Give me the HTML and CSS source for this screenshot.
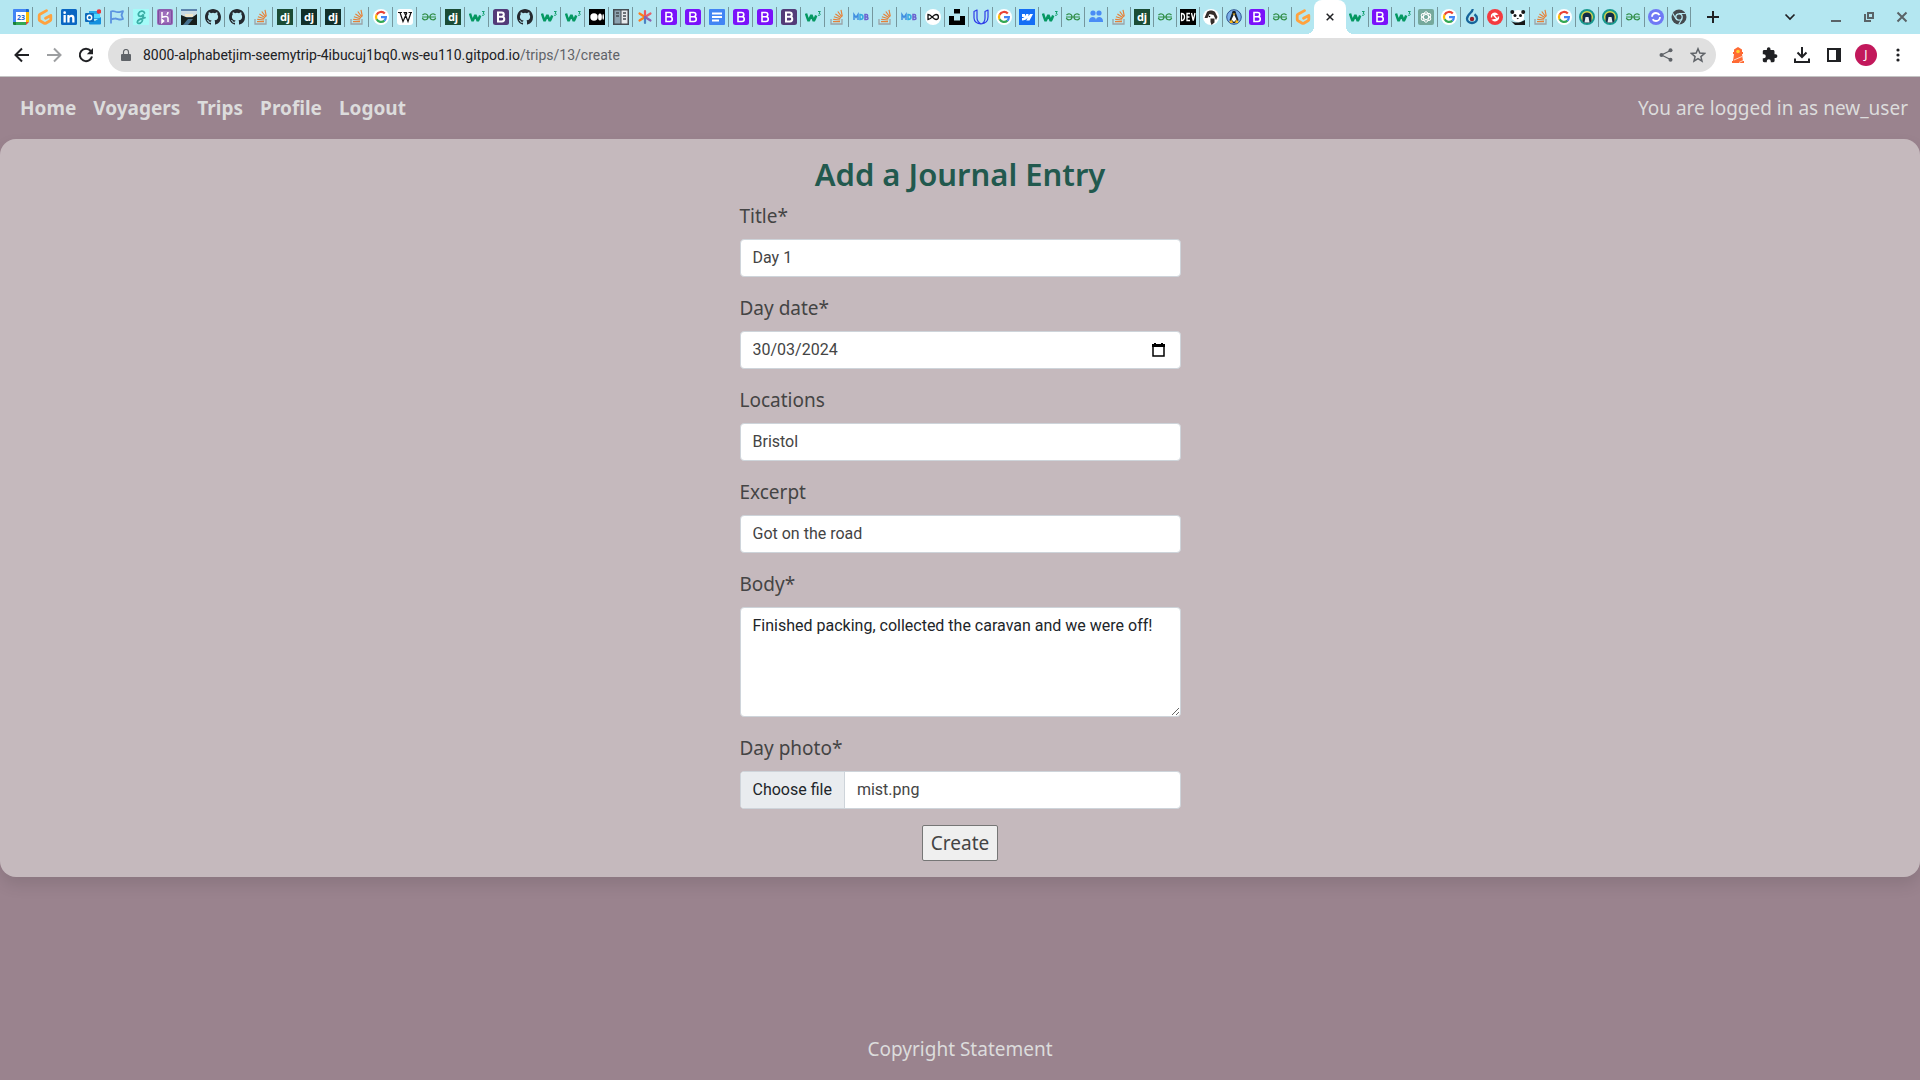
FILE: index.html
```
<!DOCTYPE html>
<html lang="en-GB">
<head>
<meta charset="utf-8">
<meta name="viewport" content="width=device-width, initial-scale=1">
<title>Add a Journal Entry</title>
<link rel="stylesheet" href="styles.css">
</head>
<body>

<svg class="sprite" aria-hidden="true">
  <symbol id="calendar" viewBox="0 0 16 16"><path fill="#4285f4" d="M0 1a1 1 0 0 1 1-1h12v3H3v10H0z"/><path fill="#fff" d="M3 3h10v10H3z"/><path fill="#1967d2" d="M13 0h2a1 1 0 0 1 1 1v2h-3z"/><path fill="#fbbc04" d="M13 3h3v10h-3z"/><path fill="#34a853" d="M3 13h10v3H3z"/><path fill="#188038" d="M0 13h3v3H1a1 1 0 0 1-1-1z"/><path fill="#ea4335" d="M13 13h3l-3 3z"/><text x="8" y="10.500" text-anchor="middle" font-size="7" font-weight="700" fill="#1967d2">23</text></symbol>
  <symbol id="gitpod" viewBox="0 0 16 16"><path d="M9.500 1.600 3 5.300a1.500 1.500 0 0 0-.8 1.300v3.900c0 .6.300 1 .8 1.300l4.200 2.400c.5.300 1.100.3 1.600 0l4.200-2.400c.5-.3.800-.7.800-1.300V6.400L8.600 9.300" fill="none" stroke="#ffa23e" stroke-width="2.800" stroke-linecap="round" stroke-linejoin="round"/></symbol>
  <symbol id="linkedin" viewBox="0 0 16 16"><rect width="16" height="16" rx="1.500" fill="#0a66c2"/><path fill="#fff" d="M2.500 6h2.300v7.500H2.500zM6.300 6h2.200v1c.5-.8 1.300-1.200 2.300-1.200 2 0 2.700 1.300 2.700 3.400v4.300h-2.300V9.600c0-1-.3-1.700-1.200-1.700-1 0-1.400.8-1.400 1.800v3.800H6.300z"/><circle cx="3.650" cy="3.700" r="1.350" fill="#fff"/></symbol>
  <symbol id="outlook" viewBox="0 0 16 16"><path fill="#28a8ea" d="M4 2h10v8H4z"/><path fill="#50d9ff" d="M9 5h6v4H9z"/><path fill="#1490df" d="M4 9l6 3 6-4v6.500a1 1 0 0 1-1 1H5a1 1 0 0 1-1-1z"/><rect y="4" width="9" height="9" rx="1" fill="#0f6cbd"/><circle cx="4.500" cy="8.500" r="2.200" fill="none" stroke="#fff" stroke-width="1.400"/><circle cx="14" cy="2.500" r="2.300" fill="#e8373e"/></symbol>
  <symbol id="flag" viewBox="0 0 16 16"><path d="M2 14.500V2.500c3-1.500 4 .8 7 .6 2 0 3-.6 5-1l-1.500 4L14 10c-4 1.600-5-.6-8-.5-1.600 0-2.500.5-4 1" fill="none" stroke="#5b93e0" stroke-width="1.800" stroke-linejoin="round"/></symbol>
  <symbol id="script-g" viewBox="0 0 16 16"><rect width="16" height="16" fill="#a4fbf8"/><path d="M11.500 4c-.5-2.800-5-2.300-6 .5-.8 3 2.600 4 5 .9L9.500 11c-.3 3-4 4.300-5 2.600-.8-2.300 3-4 7.500-5" fill="none" stroke="#3aaea6" stroke-width="1.800" stroke-linecap="round"/></symbol>
  <symbol id="heroku" viewBox="0 0 16 16"><rect width="16" height="16" rx="2" fill="#9d6dbb"/><rect x="1.500" y="1" width="13" height="14" rx="1" fill="none" stroke="#7c4d9f"/><path d="M5 3v5.300C8 7 11 7 11 9v4M11 3c0 1-.5 2-1.300 2.800M5 10.500 6.600 12 5 13.500z" fill="none" stroke="#fff" stroke-width="1.500"/></symbol>
  <symbol id="photo" viewBox="0 0 16 16"><path fill="#5d84ad" d="M0 0h16v16H0z"/><path fill="#c9dbe2" d="M0 2h16v6H0z"/><path fill="#f0e6c8" d="M4 5h8v3H4z"/><path fill="#17201c" d="M0 6l6 2.500h5L16 5v11H0z"/><path fill="#47728f" d="M7 10h5l-5 6H2z"/></symbol>
  <symbol id="github" viewBox="0 0 16 16"><path fill="#24292f" d="M8 0C3.580 0 0 3.580 0 8c0 3.540 2.290 6.530 5.470 7.590.4.070.55-.17.55-.38 0-.19-.01-.82-.01-1.490-2.010.37-2.530-.49-2.690-.94-.09-.23-.48-.94-.82-1.130-.28-.15-.68-.52-.01-.53.63-.01 1.080.58 1.230.82.72 1.210 1.870.87 2.330.66.07-.52.28-.87.51-1.070-1.780-.2-3.640-.89-3.640-3.950 0-.87.31-1.590.82-2.150-.08-.2-.36-1.020.08-2.120 0 0 .67-.21 2.200.82a7.600 7.600 0 0 1 4 0c1.530-1.040 2.200-.82 2.200-.82.44 1.100.16 1.920.08 2.120.51.56.82 1.270.82 2.150 0 3.070-1.870 3.750-3.650 3.950.29.25.54.73.54 1.480 0 1.070-.01 1.930-.01 2.200 0 .21.15.46.55.38A8 8 0 0 0 16 8c0-4.420-3.580-8-8-8z"/></symbol>
  <symbol id="stack" viewBox="0 0 16 16"><path d="M2 10v5h11v-5" fill="none" stroke="#9ba3a7" stroke-width="1.300"/><path d="M4 12.700h7M4.200 10.300l6.900.7M4.900 7.700l6.500 2M6.400 5l5.700 3.700M8.800 2.500l4 5.500M12 .8l1.300 6.500" stroke="#e58139" stroke-width="1.200" fill="none"/></symbol>
  <symbol id="django" viewBox="0 0 16 16"><rect width="16" height="16" fill="#1b4c35"/><text x="8" y="11.500" text-anchor="middle" font-size="11" font-weight="700" fill="#fff">dj</text></symbol>
  <symbol id="django-dark" viewBox="0 0 16 16"><rect width="16" height="16" fill="#12302a"/><text x="8" y="11.500" text-anchor="middle" font-size="11" font-weight="700" fill="#fff">dj</text></symbol>
  <symbol id="google" viewBox="0 0 16 16"><circle cx="8" cy="8" r="8" fill="#fff"/><g fill="none" stroke-width="2.200"><path stroke="#ea4335" d="M11.800 4.600A5 5 0 0 0 3.600 5.700"/><path stroke="#fbbc05" d="M3.600 5.600a5 5 0 0 0 0 4.800"/><path stroke="#34a853" d="M3.600 10.300a5 5 0 0 0 7.800 1.300"/><path stroke="#4285f4" d="M8 8.200h4.900a5 5 0 0 1-1.600 3.500"/></g></symbol>
  <symbol id="wiki" viewBox="0 0 16 16"><rect width="16" height="16" rx="3" fill="#fff"/><path d="M1 3.500h4M6.500 3.500h3.500M11.500 3.500h3.500M3 3.500l3 9 4-9M7.500 3.500l3.500 9 3-9" fill="none" stroke="#111" stroke-width="1.200"/></symbol>
  <symbol id="geeks" viewBox="0 0 16 16"><path d="M1 8h14M1.500 6.200C3 4 7 4.500 7 8c0 3-4.500 4-5.700 1M14.500 6.200C13 4 9 4.500 9 8c0 3 4.500 4 5.700 1" fill="none" stroke="#2f8d46" stroke-width="1.200"/></symbol>
  <symbol id="w3" viewBox="0 0 16 16"><path d="M1 4.500c.8 3 1.600 5 2.600 7.500L6.400 6l2.400 6c1-2 1.600-3.300 2.400-5.500" fill="none" stroke="#059862" stroke-width="2.500" stroke-linejoin="bevel"/><path d="M13 2.500h2.300L14 4.300c2 0 1.700 2.600-1 1.900" fill="none" stroke="#059862" stroke-width=".9"/></symbol>
  <symbol id="boot" viewBox="0 0 16 16"><rect width="16" height="16" rx="2.500" fill="#7a12fa"/><path d="M5 3.500h3.700c2.800 0 2.800 4.200 0 4.200H5h4c3 0 3 4.800 0 4.800H5z" fill="none" stroke="#fff" stroke-width="1.600"/></symbol>
  <symbol id="boot-old" viewBox="0 0 16 16"><rect width="16" height="16" rx="2.500" fill="#533b78"/><path d="M5 3.500h3.700c2.800 0 2.800 4.200 0 4.200H5h4c3 0 3 4.800 0 4.800H5z" fill="none" stroke="#fff" stroke-width="2"/></symbol>
  <symbol id="medium" viewBox="0 0 16 16"><rect width="16" height="16" fill="#000"/><circle cx="5" cy="8" r="3.700" fill="#fff"/><ellipse cx="11" cy="8" rx="1.900" ry="3.500" fill="#fff"/><ellipse cx="14.200" cy="8" rx=".8" ry="3" fill="#fff"/></symbol>
  <symbol id="book" viewBox="0 0 16 16"><rect width="16" height="16" fill="#454c52"/><path fill="#8da2af" d="M1.500 1.500h6v13h-6z"/><path fill="#e6eaec" d="M8.500 1.500h6v13h-6z"/><path d="M3 4h3M3 7h3M10 4h3M10 7h3M10 10h3" stroke="#454c52" stroke-width="1.300"/></symbol>
  <symbol id="asterisk" viewBox="0 0 16 16"><g stroke-width="2.200" stroke-linecap="round"><path stroke="#f2545b" d="M8 8V2"/><path stroke="#ff7a1a" d="M8 8 2.500 4.500M8 8l-5.500 3.500"/><path stroke="#e5606a" d="M8 8l5.500-3.500"/><path stroke="#4b83c4" d="M8 8v6"/><path stroke="#8e5fb0" d="M8 8l5.500 3.500"/></g></symbol>
  <symbol id="docs" viewBox="0 0 16 16"><rect width="16" height="16" rx="1" fill="#4285f4"/><path d="M3 4.500h10M3 8h10M3 11.500h7" stroke="#fff" stroke-width="1.800"/></symbol>
  <symbol id="mdb" viewBox="0 0 16 16"><g fill="none" stroke-width="1.500"><path stroke="#3f8fe0" d="M1 11V5.500L3 8.500l2-3V11"/><path stroke="#35a9df" d="M7 5.500v5c4 0 4-5 0-5z"/><path stroke="#6b62cf" d="M12 5.500v5h1.500c2 0 2-2.500 0-2.500H12h1.500c1.500 0 1.500-2.500 0-2.500z"/></g></symbol>
  <symbol id="loop" viewBox="0 0 16 16"><circle cx="8" cy="8" r="8" fill="#fff"/><path d="M3 5.500v5c3.500 0 5-5 8-5 3.200 0 3.200 5 0 5-3 0-4.500-5-8-5z" fill="none" stroke="#111" stroke-width="1.300"/></symbol>
  <symbol id="unsplash" viewBox="0 0 16 16"><path d="M5 0h6v4.500H5zM0 7h5v4.500h6V7h5v9H0z"/></symbol>
  <symbol id="udacity" viewBox="0 0 16 16"><path d="M1 2.500 4 1v8c0 3 1.500 4.500 4 6-4 0-7-2.500-7-6zM8 15c4.500-.5 7-3.500 7-7V1l-3 1.500V9c0 3-1 5-4 6z" fill="none" stroke="#2f3ee8" stroke-width="1.200" stroke-linejoin="round"/></symbol>
  <symbol id="webflow" viewBox="0 0 16 16"><rect width="16" height="16" fill="#146ef5"/><path fill="#fff" d="M14 5l-3.500 6.500H7.300L8.700 8.700C7.500 10.300 5.800 11.500 3 11.500V9s1.500-.1 2.500-1.100H3V5h3v2.200L7.300 5h2.200v2.200L11 5z"/></symbol>
  <symbol id="people" viewBox="0 0 16 16"><g fill="#4a8cf5"><circle cx="5" cy="4" r="2.600"/><circle cx="11" cy="4" r="2.600"/><path d="M1 12c0-5 7-5 7-1 0-4 7-4 7 1v1H1z"/></g></symbol>
  <symbol id="dev" viewBox="0 0 16 16"><rect width="16" height="16" fill="#000"/><path d="M1.500 4.500v7c4 0 4-7 0-7zM10 4.500H7v7h3M7 8h2.500M11.500 4l1.700 7.500L15 4" fill="none" stroke="#fff" stroke-width="1.300"/></symbol>
  <symbol id="dog" viewBox="0 0 16 16"><circle cx="8" cy="8" r="8" fill="#fff"/><path fill="#352d2a" d="M4 3c2-2 6-2 8 0l2.500 5-1.500 3-2.500-5-4-1-2 4H1.500zM7.500 9.500h4v4l-3 2.500-1-3z"/><circle cx="6.500" cy="7.500" r=".8"/></symbol>
  <symbol id="tux" viewBox="0 0 16 16"><circle cx="8" cy="8" r="7.300" fill="#7baeea" stroke="#30538f"/><path fill="#16202c" d="M6 4c0-3 4-3 4 0l2.500 7-2 3h-5l-2-3z"/><path fill="#fff" d="M8 5.500l2.500 5L8 13l-2.500-2.500z"/><path fill="#f6b925" d="M6.500 4.500h3L8 6.500zM3.500 12l2.500-1 1 3H4zM12.500 12l-2.500-1-1 3h3z"/></symbol>
  <symbol id="gpt" viewBox="0 0 16 16"><rect width="16" height="16" rx="2" fill="#75a99c"/><g fill="none" stroke="#fff"><ellipse cx="8" cy="8" rx="2.500" ry="5.200"/><ellipse cx="8" cy="8" rx="2.500" ry="5.200" transform="rotate(60 8 8)"/><ellipse cx="8" cy="8" rx="2.500" ry="5.200" transform="rotate(120 8 8)"/></g></symbol>
  <symbol id="drop" viewBox="0 0 16 16"><path d="M8.500 0c1 3-5.500 5-5.500 9.800 0 5.600 10 5.600 10 0 0-2-1-3.400-2.500-4.500" fill="none" stroke="#16659b" stroke-width="2.300"/><circle cx="8" cy="10" r="2.200" fill="#961e2b"/></symbol>
  <symbol id="red" viewBox="0 0 16 16"><circle cx="8" cy="8" r="8" fill="#f43b40"/><path d="M4.500 8.500C4 5 7.500 3 10 5.200L6.500 6l3.500 4-4 1c2.500 2 6-.5 5.500-3.500" fill="none" stroke="#fff" stroke-width="1.500"/></symbol>
  <symbol id="panda" viewBox="0 0 16 16"><path fill="#fff" d="M2 4c2-4 10-4 12 0v6c-3 4-8 4-12 0z"/><g fill="#161616"><circle cx="2.300" cy="3" r="2"/><circle cx="13.200" cy="3" r="2"/><circle cx="5" cy="6.500" r="1.500"/><circle cx="10.500" cy="6.500" r="1.500"/><path d="M6.500 9h2.500l-1.200 1.200zM1 12c4 2.500 9 2 14-1v5H5z"/></g></symbol>
  <symbol id="penguin" viewBox="0 0 16 16"><circle cx="8" cy="8" r="7" fill="#d7d94b" stroke="#19998f" stroke-width="2"/><path fill="#122c46" d="M3.500 7.500c0-5.500 9-5.500 9 0V12c-2 3-7 3-9 0z"/><path fill="#e8edf0" d="M6.500 8h3l1 5.500h-5z"/></symbol>
  <symbol id="orbit" viewBox="0 0 16 16"><circle cx="8" cy="8" r="8" fill="#6f79f5"/><circle cx="8" cy="8" r="4" fill="none" stroke="#fff" stroke-width="1.800" stroke-dasharray="10 2.560"/></symbol>
  <symbol id="chrome" viewBox="0 0 16 16"><circle cx="8" cy="8" r="7.500" fill="#454a4f"/><circle cx="8" cy="8" r="3.200" fill="none" stroke="#b6e8f2" stroke-width="1.300"/><path d="M8 4.500h6.800M5 9.800 1.600 4.200M11 9.800l-3.300 5.700" stroke="#b6e8f2" stroke-width="1.200"/></symbol>
</svg>

<header class="browser">
  <nav class="tabs" aria-label="Open tabs">
    <a class="tab" href="#"><svg><use href="#calendar"/></svg></a>
    <a class="tab" href="#"><svg><use href="#gitpod"/></svg></a>
    <a class="tab" href="#"><svg><use href="#linkedin"/></svg></a>
    <a class="tab" href="#"><svg><use href="#outlook"/></svg></a>
    <a class="tab" href="#"><svg><use href="#flag"/></svg></a>
    <a class="tab" href="#"><svg><use href="#script-g"/></svg></a>
    <a class="tab" href="#"><svg><use href="#heroku"/></svg></a>
    <a class="tab" href="#"><svg><use href="#photo"/></svg></a>
    <a class="tab" href="#"><svg><use href="#github"/></svg></a>
    <a class="tab" href="#"><svg><use href="#github"/></svg></a>
    <a class="tab" href="#"><svg><use href="#stack"/></svg></a>
    <a class="tab" href="#"><svg><use href="#django"/></svg></a>
    <a class="tab" href="#"><svg><use href="#django-dark"/></svg></a>
    <a class="tab" href="#"><svg><use href="#django-dark"/></svg></a>
    <a class="tab" href="#"><svg><use href="#stack"/></svg></a>
    <a class="tab" href="#"><svg><use href="#google"/></svg></a>
    <a class="tab" href="#"><svg><use href="#wiki"/></svg></a>
    <a class="tab" href="#"><svg><use href="#geeks"/></svg></a>
    <a class="tab" href="#"><svg><use href="#django"/></svg></a>
    <a class="tab" href="#"><svg><use href="#w3"/></svg></a>
    <a class="tab" href="#"><svg><use href="#boot-old"/></svg></a>
    <a class="tab" href="#"><svg><use href="#github"/></svg></a>
    <a class="tab" href="#"><svg><use href="#w3"/></svg></a>
    <a class="tab" href="#"><svg><use href="#w3"/></svg></a>
    <a class="tab" href="#"><svg><use href="#medium"/></svg></a>
    <a class="tab" href="#"><svg><use href="#book"/></svg></a>
    <a class="tab" href="#"><svg><use href="#asterisk"/></svg></a>
    <a class="tab" href="#"><svg><use href="#boot"/></svg></a>
    <a class="tab" href="#"><svg><use href="#boot"/></svg></a>
    <a class="tab" href="#"><svg><use href="#docs"/></svg></a>
    <a class="tab" href="#"><svg><use href="#boot"/></svg></a>
    <a class="tab" href="#"><svg><use href="#boot"/></svg></a>
    <a class="tab" href="#"><svg><use href="#boot-old"/></svg></a>
    <a class="tab" href="#"><svg><use href="#w3"/></svg></a>
    <a class="tab" href="#"><svg><use href="#stack"/></svg></a>
    <a class="tab" href="#"><svg><use href="#mdb"/></svg></a>
    <a class="tab" href="#"><svg><use href="#stack"/></svg></a>
    <a class="tab" href="#"><svg><use href="#mdb"/></svg></a>
    <a class="tab" href="#"><svg><use href="#loop"/></svg></a>
    <a class="tab" href="#"><svg><use href="#unsplash"/></svg></a>
    <a class="tab" href="#"><svg><use href="#udacity"/></svg></a>
    <a class="tab tab-narrow" href="#"><svg><use href="#google"/></svg></a>
    <a class="tab tab-narrow" href="#"><svg><use href="#webflow"/></svg></a>
    <a class="tab tab-narrow" href="#"><svg><use href="#w3"/></svg></a>
    <a class="tab tab-narrow" href="#"><svg><use href="#geeks"/></svg></a>
    <a class="tab tab-narrow" href="#"><svg><use href="#people"/></svg></a>
    <a class="tab tab-narrow" href="#"><svg><use href="#stack"/></svg></a>
    <a class="tab tab-narrow" href="#"><svg><use href="#django"/></svg></a>
    <a class="tab tab-narrow" href="#"><svg><use href="#geeks"/></svg></a>
    <a class="tab tab-narrow" href="#"><svg><use href="#dev"/></svg></a>
    <a class="tab tab-narrow" href="#"><svg><use href="#dog"/></svg></a>
    <a class="tab tab-narrow" href="#"><svg><use href="#tux"/></svg></a>
    <a class="tab tab-narrow" href="#"><svg><use href="#boot"/></svg></a>
    <a class="tab tab-narrow" href="#"><svg><use href="#geeks"/></svg></a>
    <a class="tab tab-narrow tab-last" href="#"><svg><use href="#gitpod"/></svg></a>
    <div class="tab-active"><button class="icon-button" type="button" aria-label="Close tab"><svg width="8" height="8" viewBox="0 0 8 8"><path d="M.7.7l6.600 6.600M7.300.7.700 7.300" stroke="#202124" stroke-width="1.500"/></svg></button></div>
    <a class="tab tab-narrow" href="#"><svg><use href="#w3"/></svg></a>
    <a class="tab tab-narrow" href="#"><svg><use href="#boot"/></svg></a>
    <a class="tab tab-narrow" href="#"><svg><use href="#w3"/></svg></a>
    <a class="tab tab-narrow" href="#"><svg><use href="#gpt"/></svg></a>
    <a class="tab tab-narrow" href="#"><svg><use href="#google"/></svg></a>
    <a class="tab tab-narrow" href="#"><svg><use href="#drop"/></svg></a>
    <a class="tab tab-narrow" href="#"><svg><use href="#red"/></svg></a>
    <a class="tab tab-narrow" href="#"><svg><use href="#panda"/></svg></a>
    <a class="tab tab-narrow" href="#"><svg><use href="#stack"/></svg></a>
    <a class="tab tab-narrow" href="#"><svg><use href="#google"/></svg></a>
    <a class="tab tab-narrow" href="#"><svg><use href="#penguin"/></svg></a>
    <a class="tab tab-narrow" href="#"><svg><use href="#penguin"/></svg></a>
    <a class="tab tab-narrow" href="#"><svg><use href="#geeks"/></svg></a>
    <a class="tab tab-narrow" href="#"><svg><use href="#orbit"/></svg></a>
    <a class="tab tab-narrow" href="#"><svg><use href="#chrome"/></svg></a>
    <button class="icon-button new-tab" type="button" aria-label="New tab"><svg width="12" height="12" viewBox="0 0 12 12"><path d="M6 0v12M0 6h12" stroke="#202124" stroke-width="2"/></svg></button>
    <div class="window-controls">
      <button class="icon-button" type="button" aria-label="Search tabs"><svg width="12" height="12" viewBox="0 0 12 12"><path d="M1.500 3.500 6 8l4.500-4.500" fill="none" stroke="#202124" stroke-width="1.700"/></svg></button>
      <button class="icon-button" type="button" aria-label="Minimise"><svg width="12" height="12" viewBox="0 0 12 12"><path d="M1 10h10" stroke="#5a6367" stroke-width="2"/></svg></button>
      <button class="icon-button" type="button" aria-label="Restore"><svg width="12" height="12" viewBox="0 0 12 12"><path d="M5 2h5v5H5zM2 3v7h6" fill="none" stroke="#5a6367" stroke-width="2"/></svg></button>
      <button class="icon-button" type="button" aria-label="Close window"><svg width="12" height="12" viewBox="0 0 12 12"><path d="M1.500 1.500l9 9M10.500 1.500l-9 9" stroke="#5a6367" stroke-width="2"/></svg></button>
    </div>
  </nav>

  <div class="toolbar">
    <div class="history">
      <button class="icon-button" type="button" aria-label="Back"><svg width="16" height="16" viewBox="0 0 16 16"><path d="M15 8H2.500M8 1.500 1.500 8 8 14.500" fill="none" stroke="#202124" stroke-width="2"/></svg></button>
      <button class="icon-button" type="button" aria-label="Forward"><svg width="16" height="16" viewBox="0 0 16 16"><path d="M1 8h12.500M8 1.500 14.500 8 8 14.500" fill="none" stroke="#9d9fa1" stroke-width="2"/></svg></button>
      <button class="icon-button" type="button" aria-label="Reload"><svg width="16" height="16" viewBox="0 0 16 16"><path d="M12.800 4A6.200 6.200 0 1 0 14 9.500" fill="none" stroke="#202124" stroke-width="2"/><path fill="#202124" d="M15 1v6.200H8.800z"/></svg></button>
    </div>
    <div class="address">
      <svg width="10" height="12" viewBox="0 0 10 12" aria-hidden="true"><path fill="#5f6368" d="M1 5h8a1 1 0 0 1 1 1v5a1 1 0 0 1-1 1H1a1 1 0 0 1-1-1V6a1 1 0 0 1 1-1z"/><path d="M2.500 5V3a2.500 2.500 0 0 1 5 0v2" fill="none" stroke="#5f6368" stroke-width="1.200"/></svg>
      <span class="url">8000-alphabetjim-seemytrip-4ibucuj1bq0.ws-eu110.gitpod.io<span class="url-path">/trips/13/create</span></span>
      <div class="address-actions">
        <button class="icon-button" type="button" aria-label="Share"><svg width="14" height="14" viewBox="0 0 14 14"><path d="M11.500 2.500 2.500 7l9 4.500" fill="none" stroke="#5f6368" stroke-width="1.300"/><g fill="#5f6368"><circle cx="11.500" cy="2.300" r="2"/><circle cx="2.500" cy="7" r="2"/><circle cx="11.500" cy="11.700" r="2"/></g></svg></button>
        <button class="icon-button" type="button" aria-label="Bookmark"><svg width="16" height="16" viewBox="0 0 16 16"><path d="M8 1.800l1.800 4.300 4.700.4-3.600 3.100 1.100 4.600-4-2.500-4 2.500 1.100-4.600L1.500 6.500l4.700-.4z" fill="none" stroke="#5f6368" stroke-width="1.500"/></svg></button>
      </div>
    </div>
    <div class="extensions">
      <button class="icon-button" type="button" aria-label="Lighthouse"><svg width="16" height="16" viewBox="0 0 16 16"><path fill="#ff6a33" d="M8 0l4 2.500V5h1v2h-1L13 14h1v2H2v-2h1l1-7H3V5h1V2.500z"/><circle cx="8" cy="4.500" r="1.800" fill="#ffd02f"/><path d="M4 13l8-3.500M9 15.500l4-2" stroke="#ffd5c4"/></svg></button>
      <button class="icon-button" type="button" aria-label="Extensions"><svg width="16" height="16" viewBox="0 0 16 16"><path fill="#202124" d="M13.500 7.300h-1V4.500c0-.8-.6-1.400-1.400-1.400H8.500v-1a1.800 1.800 0 0 0-3.600 0v1H2.200C1.400 3.100.8 3.700.8 4.500v2.700h1a2 2 0 0 1 0 4h-1v2.600c0 .8.600 1.400 1.400 1.400h2.600v-1a2 2 0 0 1 4 0v1h2.400c.8 0 1.400-.6 1.400-1.400V11h1a1.800 1.800 0 0 0-.1-3.700z"/></svg></button>
      <button class="icon-button" type="button" aria-label="Downloads"><svg width="16" height="16" viewBox="0 0 16 16"><path d="M8 0v9.500M3.500 5.500 8 10l4.500-4.500M1 11.500V15h14v-3.500" fill="none" stroke="#202124" stroke-width="2"/></svg></button>
      <button class="icon-button" type="button" aria-label="Side panel"><svg width="16" height="16" viewBox="0 0 16 16"><path d="M2 2h12v12H2z" fill="none" stroke="#202124" stroke-width="2"/><path fill="#202124" d="M10 1h5v14h-5z"/></svg></button>
      <button class="avatar" type="button">J</button>
      <button class="icon-button" type="button" aria-label="Menu"><svg width="16" height="16" viewBox="0 0 16 16"><g fill="#202124"><circle cx="8" cy="3" r="1.600"/><circle cx="8" cy="8" r="1.600"/><circle cx="8" cy="13" r="1.600"/></g></svg></button>
    </div>
  </div>
</header>

<div class="site">
  <nav class="site-nav">
    <ul class="site-links">
      <li><a href="#">Home</a></li>
      <li><a href="#">Voyagers</a></li>
      <li><a href="#">Trips</a></li>
      <li><a href="#">Profile</a></li>
      <li><a href="#">Logout</a></li>
    </ul>
    <span>You are logged in as new_user</span>
  </nav>

  <main class="card">
    <form class="entry-form" action="#" method="post">
      <h1 class="heading">Add a Journal Entry</h1>

      <div class="field">
        <label for="title">Title*</label>
        <input class="control" id="title" type="text" value="Day 1">
      </div>
      <div class="field">
        <label for="day-date">Day date*</label>
        <div class="control date-control">
          <input class="date-input" id="day-date" type="text" inputmode="numeric" value="30/03/2024">
          <button class="icon-button" type="button" aria-label="Show date picker"><svg width="13" height="14" viewBox="0 0 13 14"><path d="M1 2h11v11H1z" fill="none" stroke="#000" stroke-width="1.500"/><path d="M0 1h13v3H0zM2 0h2v2H2zM9 0h2v2H9z"/></svg></button>
        </div>
      </div>
      <div class="field">
        <label for="locations">Locations</label>
        <input class="control" id="locations" type="text" value="Bristol">
      </div>
      <div class="field">
        <label for="excerpt">Excerpt</label>
        <input class="control" id="excerpt" type="text" value="Got on the road">
      </div>
      <div class="field">
        <label for="body">Body*</label>
        <textarea class="control control-text" id="body" rows="4">Finished packing, collected the caravan and we were off!</textarea>
      </div>
      <div class="field">
        <label for="day-photo">Day photo*</label>
        <div class="control file-control">
          <span class="file-button">Choose file</span>
          <span class="file-name">mist.png</span>
          <input class="file-input" id="day-photo" type="file" accept="image/*">
        </div>
      </div>

      <button class="submit" type="submit">Create</button>
    </form>
  </main>

  <footer class="site-footer">Copyright Statement</footer>
</div>

</body>
</html>
```
FILE: styles.css
```
*,
*::before,
*::after {
  box-sizing: border-box;
}

body {
  margin: 0;
  min-height: 100vh;
  display: flex;
  flex-direction: column;
  background: #9a838e;
  color: #444;
  font-family: "Noto Sans", sans-serif;
  font-size: 19px;
  line-height: 30px;
}

.sprite {
  display: none;
}

svg {
  display: block;
}

symbol text {
  font-family: "Noto Sans", sans-serif;
}

.icon-button {
  display: flex;
  align-items: center;
  justify-content: center;
  padding: 0;
  border: 0;
  background: none;
}

/* Browser window */

.browser {
  background: #fff;
  border-bottom: 1px solid #c4c4c4;
}

.tabs {
  display: flex;
  align-items: center;
  height: 34px;
  padding-left: 9px;
  overflow: hidden;
  background: #b4e7f1;
}

.tab {
  flex: none;
  display: flex;
  align-items: center;
  width: 24px;
  height: 20px;
  padding-left: 4px;
  border-right: 1px solid #75979e;
}

.tab svg {
  flex: none;
  width: 16px;
  height: 16px;
}

.tab-narrow {
  width: 23px;
  padding-left: 3px;
}

.tab-last {
  width: 22px;
  border-right: 0;
}

.tab-active {
  position: relative;
  flex: none;
  display: flex;
  align-items: center;
  justify-content: center;
  width: 32px;
  height: 34px;
  border-radius: 8px 8px 0 0;
  background: #fff;
}

.tab-active::before,
.tab-active::after {
  content: "";
  position: absolute;
  bottom: 0;
  width: 8px;
  height: 8px;
}

.tab-active::before {
  right: 100%;
  background: radial-gradient(circle at 0 0, transparent 8px, #fff 8px);
}

.tab-active::after {
  left: 100%;
  background: radial-gradient(circle at 100% 0, transparent 8px, #fff 8px);
}

.new-tab {
  margin-left: 16px;
}

.window-controls {
  display: flex;
  gap: 21px;
  margin-left: auto;
  padding-right: 12px;
}

.window-controls .icon-button:first-child {
  margin-right: 13px;
}

.toolbar {
  display: flex;
  align-items: center;
  height: 42px;
  padding: 0 14px;
}

.history {
  display: flex;
  gap: 16px;
  margin-right: 14px;
}

.address {
  flex: 1;
  display: flex;
  align-items: center;
  gap: 12px;
  height: 34px;
  margin-right: 14px;
  padding: 0 10px 0 13px;
  border-radius: 17px;
  background: #e0e0e0;
}

.address-actions {
  display: flex;
  align-items: center;
  gap: 17px;
}

.url {
  flex: 1;
  color: #202124;
  font-family: Roboto, sans-serif;
  font-size: 14px;
}

.url-path {
  color: #5f6368;
}

.extensions {
  display: flex;
  align-items: center;
  gap: 16px;
}

.avatar {
  width: 22px;
  height: 22px;
  margin: 0 -3px;
  padding: 0;
  border: 0;
  border-radius: 50%;
  background: #c2185b;
  color: #fff;
  font-family: "Noto Sans", sans-serif;
  font-size: 12px;
  line-height: 22px;
}

/* Site */

.site {
  flex: 1;
  display: flex;
  flex-direction: column;
}

.site-nav {
  display: flex;
  align-items: center;
  justify-content: space-between;
  padding: 16px 12px 16px 20px;
  color: #dcdcdc;
}

.site-links {
  display: flex;
  gap: 17px;
  margin: 0;
  padding: 0;
  list-style: none;
}

.site-links a {
  color: inherit;
  font-weight: 700;
  text-decoration: none;
}

.card {
  padding: 16px;
  border-radius: 16px;
  background: #c5b9bd;
  box-shadow: 0 8px 16px rgba(0, 0, 0, 0.1);
}

.entry-form {
  display: flex;
  flex-direction: column;
  gap: 16px;
  width: 441px;
  max-width: 100%;
  margin: 0 auto;
}

.heading {
  margin: 0 0 -8px;
  color: #22594e;
  font-size: 31px;
  font-weight: 600;
  line-height: 38px;
  text-align: center;
}

.field {
  display: flex;
  flex-direction: column;
  gap: 8px;
}

.control {
  width: 100%;
  padding: 6px 12px;
  border: 1px solid #ced4da;
  border-radius: 4px;
  background: #fff;
  color: #444;
  font-family: Roboto, sans-serif;
  font-size: 16px;
  line-height: 24px;
}

.control-text {
  display: block;
  resize: vertical;
  color: #212529;
}

.date-control {
  display: flex;
  padding-right: 15px;
}

.date-input {
  flex: 1;
  min-width: 0;
  padding: 0;
  border: 0;
  background: none;
  color: inherit;
  font: inherit;
}

.file-control {
  position: relative;
  display: flex;
  padding: 0;
  overflow: hidden;
}

.file-button {
  padding: 6px 12px;
  border-right: 1px solid #ced4da;
  background: #e9ecef;
  color: #212529;
}

.file-name {
  padding: 6px 12px;
}

.file-input {
  position: absolute;
  inset: 0;
  width: 100%;
  opacity: 0;
}

.submit {
  align-self: center;
  height: 36px;
  padding: 0 8px;
  border: 1px solid #767676;
  border-radius: 2px;
  background: #efefef;
  color: #444;
  font: inherit;
}

.site-footer {
  margin-top: auto;
  padding: 16px;
  color: #dcdcdc;
  text-align: center;
}
```
